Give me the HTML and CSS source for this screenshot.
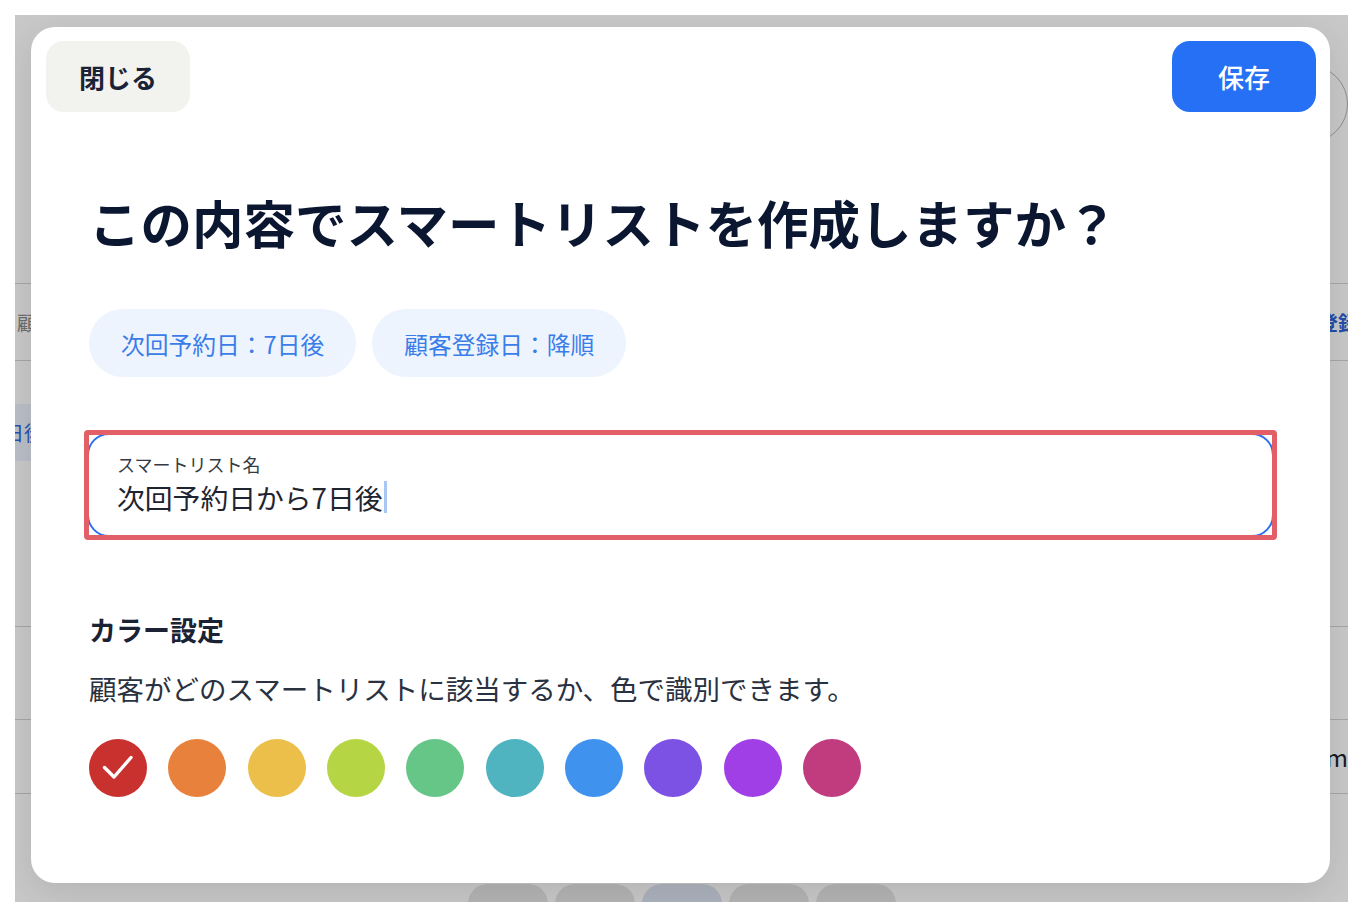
FILE: index.html
```html
<!DOCTYPE html>
<html lang="ja">
<head>
<meta charset="utf-8">
<title>スマートリスト作成</title>
<link rel="stylesheet" href="styles.css">
</head>
<body>
<div class="screen">
  <div class="app">
    <header class="app-header"><span class="avatar"></span></header>
    <div class="table">
      <div class="row row-head">
        <span class="cell-left">顧客名</span>
        <span class="cell-right">顧客登録日</span>
      </div>
      <div class="row row-1">
        <span class="bg-tag">7日後</span>
      </div>
      <div class="row row-2"></div>
      <div class="row row-3"><span class="cell-right cell-dark">m</span></div>
    </div>
    <div class="pager">
      <span class="pill"></span>
      <span class="pill"></span>
      <span class="pill pill-active"></span>
      <span class="pill"></span>
      <span class="pill"></span>
    </div>
  </div>

  <div class="overlay">
    <div class="modal">
      <div class="modal-header">
        <button class="btn btn-close">閉じる</button>
        <button class="btn btn-save">保存</button>
      </div>

      <h1 class="title">この内容でスマートリストを作成しますか？</h1>

      <div class="chips">
        <span class="chip">次回予約日：7日後</span>
        <span class="chip">顧客登録日：降順</span>
      </div>

      <div class="field-wrap">
        <div class="field">
          <div class="field-label">スマートリスト名</div>
          <div class="field-value">次回予約日から7日後<span class="caret"></span></div>
        </div>
      </div>

      <div class="section">
        <h2 class="section-title">カラー設定</h2>
        <p class="section-desc">顧客がどのスマートリストに該当するか、色で識別できます。</p>
        <div class="swatches">
          <span class="swatch sw-red">
            <svg width="58" height="58" viewBox="0 0 58 58"><path d="M15.5 28.5 L25 38 L42 18.5" fill="none" stroke="#fff" stroke-width="3.4" stroke-linecap="round" stroke-linejoin="round"/></svg>
          </span>
          <span class="swatch sw-orange"></span>
          <span class="swatch sw-yellow"></span>
          <span class="swatch sw-lime"></span>
          <span class="swatch sw-green"></span>
          <span class="swatch sw-teal"></span>
          <span class="swatch sw-blue"></span>
          <span class="swatch sw-purple"></span>
          <span class="swatch sw-violet"></span>
          <span class="swatch sw-magenta"></span>
        </div>
      </div>
    </div>
  </div>
</div>
</body>
</html>
```

FILE: styles.css
```css
* {
  box-sizing: border-box;
}

body {
  margin: 0;
  background: #ffffff;
  font-family: "Noto Sans CJK JP", "Noto Sans", sans-serif;
}

.screen {
  position: relative;
  margin: 15px;
  width: 1333px;
  height: 887px;
  overflow: hidden;
  background: #ffffff;
}

/* background app */
.app {
  display: flex;
  flex-direction: column;
  height: 100%;
}

.app-header {
  height: 268px;
  display: flex;
  justify-content: flex-end;
  align-items: flex-start;
  padding-top: 50px;
}

.avatar {
  width: 78px;
  height: 78px;
  border-radius: 50%;
  border: 1px solid #b5b5b5;
}

.row {
  display: flex;
  justify-content: space-between;
  align-items: center;
  border-bottom: 1px solid #d4d4d4;
  font-size: 20px;
}

.row-head {
  border-top: 1px solid #d4d4d4;
  height: 78px;
}

.cell-left {
  color: #8c8c8c;
  padding-left: 2px;
}

.cell-right {
  color: #2f63d8;
  font-weight: 700;
  margin-left: auto;
  margin-right: -30px;
}

.cell-dark {
  color: #1c2433;
  font-weight: 400;
  font-size: 24px;
  margin-right: 0;
}

.row-1 {
  height: 266px;
  align-items: flex-start;
  padding-top: 43px;
}

.bg-tag {
  height: 57px;
  display: flex;
  align-items: center;
  margin-left: -22px;
  padding-right: 20px;
  background: #eef3fe;
  color: #2f6ae0;
  font-size: 20px;
}

.row-2 {
  height: 93px;
}

.row-3 {
  height: 74px;
}

.pager {
  margin-top: auto;
  margin-bottom: -22px;
  display: flex;
  justify-content: center;
  gap: 7px;
}

.pill {
  width: 80px;
  height: 40px;
  border-radius: 20px;
  background: #e6e6e6;
}

.pill-active {
  background: #dde5f3;
}

/* overlay + modal */
.overlay {
  position: absolute;
  inset: 0;
  background: rgba(0, 0, 0, 0.216);
  display: flex;
  align-items: flex-start;
  padding: 12px 0 0 16px;
}

.modal {
  width: 1299px;
  height: 856px;
  background: #ffffff;
  border-radius: 24px;
  box-shadow: 0 10px 36px rgba(0, 0, 0, 0.1);
}

.modal-header {
  display: flex;
  justify-content: space-between;
  padding: 14px 14px 0 15px;
}

.btn {
  width: 144px;
  height: 71px;
  border: none;
  border-radius: 18px;
  font-family: inherit;
  font-size: 26px;
  font-weight: 700;
  padding: 0;
}

.btn-close {
  background: #f2f2ef;
  color: #1a2336;
}

.btn-save {
  background: #2570f4;
  color: #ffffff;
  font-weight: 500;
}

.title {
  margin: 79px 0 0;
  padding: 0 58px;
  font-size: 51.5px;
  line-height: 62px;
  font-weight: 700;
  color: #0b1730;
}

.chips {
  display: flex;
  gap: 16px;
  margin-top: 56px;
  padding: 0 58px;
}

.chip {
  height: 68px;
  display: flex;
  align-items: center;
  padding: 0 32px;
  border-radius: 34px;
  background: #edf4fe;
  color: #3b7de8;
  font-size: 23.75px;
}

.field-wrap {
  margin: 53px 53px 0;
  border: 5px solid #e35f68;
  border-radius: 4px;
  overflow: hidden;
}

.field {
  margin: -2px;
  border: 2px solid #2a6ff2;
  border-radius: 22px;
  padding: 18px 28px 20px;
}

.field-label {
  font-size: 18px;
  line-height: 23px;
  color: #333a44;
}

.field-value {
  margin-top: 3px;
  font-size: 27.8px;
  line-height: 36px;
  color: #1f2530;
  display: flex;
  align-items: center;
}

.caret {
  display: inline-block;
  width: 3px;
  height: 32px;
  margin-left: 1px;
  background: #a9c6f6;
}

.section {
  margin-top: 72px;
  padding: 0 58px;
}

.section-title {
  margin: 0;
  font-size: 27px;
  line-height: 36px;
  font-weight: 700;
  color: #1a2233;
}

.section-desc {
  margin: 21px 0 0;
  font-size: 27.5px;
  line-height: 38px;
  color: #2a3140;
}

.swatches {
  display: flex;
  gap: 21.33px;
  margin-top: 32px;
}

.swatch {
  width: 58px;
  height: 58px;
  border-radius: 50%;
  display: block;
}

.swatch svg {
  display: block;
}

.sw-red { background: #c8312e; }
.sw-orange { background: #e8813b; }
.sw-yellow { background: #ecbf4a; }
.sw-lime { background: #b5d544; }
.sw-green { background: #66c687; }
.sw-teal { background: #4fb3c0; }
.sw-blue { background: #3f92ee; }
.sw-purple { background: #7b52e3; }
.sw-violet { background: #a03fe5; }
.sw-magenta { background: #c03c7f; }
```
